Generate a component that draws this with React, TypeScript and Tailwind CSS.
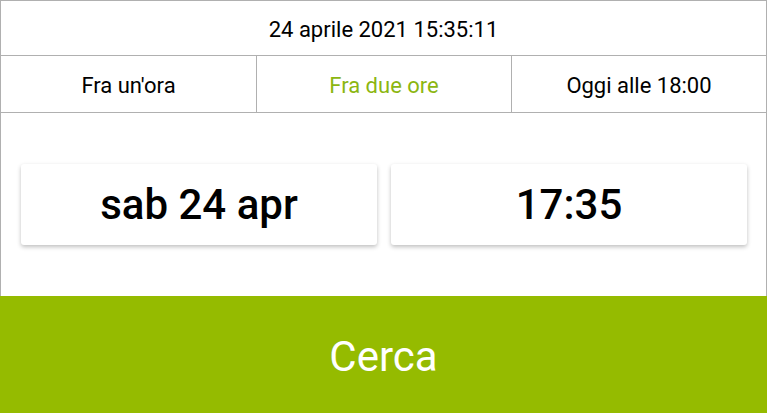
import React from 'react';

const presets = [
  { label: "Fra un'ora", active: false },
  { label: 'Fra due ore', active: true },
  { label: 'Oggi alle 18:00', active: false },
];

const App: React.FC = () => {
  return (
    <div className="w-[767px] h-[413px] flex flex-col bg-white font-['Roboto',sans-serif] text-black overflow-hidden">
      <div className="h-[56px] flex items-center justify-center pt-[3px] border border-[#b0b0b0] text-[22px]">
        24 aprile 2021 15:35:11
      </div>

      <div className="h-[57px] grid grid-cols-3 border-x border-b border-[#b0b0b0] text-[22px]">
        {presets.map((p, i) => (
          <div
            key={p.label}
            className={`flex items-center justify-center pt-[2px] ${i > 0 ? 'border-l border-[#b0b0b0]' : ''} ${
              p.active ? 'text-[#8cb611]' : 'text-black'
            }`}
          >
            {p.label}
          </div>
        ))}
      </div>

      <div className="flex-1 flex items-center gap-[14px] pl-5 pr-[19px] border-x border-[#b0b0b0]">
        <div className="flex-1 h-[81px] flex items-center justify-center bg-white rounded-[3px] shadow-[0_2px_4px_rgba(0,0,0,0.25)] text-[42px] font-medium">
          sab 24 apr
        </div>
        <div className="flex-1 h-[81px] flex items-center justify-center bg-white rounded-[3px] shadow-[0_2px_4px_rgba(0,0,0,0.25)] text-[42px] font-medium">
          17:35
        </div>
      </div>

      <button className="h-[117px] shrink-0 flex items-center justify-center pt-1 bg-[#95bb00] text-white text-[42px]">
        Cerca
      </button>
    </div>
  );
};

export default App;
